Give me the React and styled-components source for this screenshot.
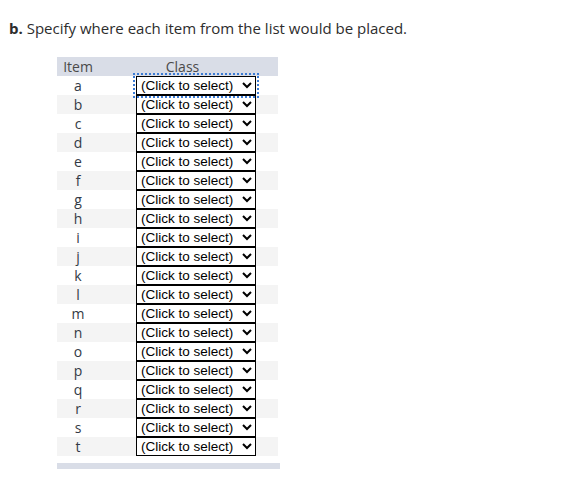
import React from 'react';
import styled, { createGlobalStyle } from 'styled-components';

const GlobalStyle = createGlobalStyle`
  body {
    margin: 0;
    background: #fff;
    font-family: "Open Sans", "Liberation Sans", sans-serif;
    color: #333;
  }
`;

const Page = styled.div`
  padding: 17px 9px;
`;

const Prompt = styled.p`
  margin: 0 0 18px;
  font-size: 15px;
  line-height: 22px;
  color: #2d2d2d;

  b {
    font-weight: 700;
  }
`;

const Wrap = styled.div`
  margin-left: 48px;
  width: 223px;
`;

const Table = styled.table`
  border-collapse: collapse;
  width: 221px;
  font-family: "Open Sans", "Liberation Sans", sans-serif;
`;

const HeadCell = styled.th`
  background: #d9dde7;
  font-weight: 400;
  font-size: 14px;
  color: #4a4a4a;
  height: 19px;
  padding: 0;
  line-height: 19px;
  text-align: center;
  padding-right: ${(p) => (p.$shift ? '12px' : '0')};
`;

const Row = styled.tr`
  background: ${(p) => (p.$shade ? '#f4f4f4' : '#fff')};
`;

const ItemCell = styled.td`
  width: 42px;
  height: 19px;
  padding: 0;
  text-align: center;
  font-size: 14px;
  line-height: 19px;
  color: #333a45;
`;

const ClassCell = styled.td`
  padding: 0 0 0 37px;
  height: 19px;
  vertical-align: top;
`;

const Picker = styled.select`
  display: block;
  width: 120px;
  height: 19px;
  margin: 0;
  padding: 0;
  border: 1px solid #000;
  border-radius: 0;
  background: #fff;
  font-family: "Liberation Sans", Arial, sans-serif;
  font-size: 13.5px;
  line-height: 17px;
  color: #000;
  outline: ${(p) => (p.$focused ? '2px dotted #3b7bd4' : 'none')};
  outline-offset: 1px;
`;

const Footer = styled.div`
  margin-top: 7px;
  height: 6px;
  background: #d9dde7;
`;

const items = 'abcdefghijklmnopqrst'.split('');

export default function App() {
  return (
    <>
      <GlobalStyle />
      <Page>
        <Prompt>
          <b>b.</b> Specify where each item from the list would be placed.
        </Prompt>
        <Wrap>
          <Table>
            <thead>
              <tr>
                <HeadCell>Item</HeadCell>
                <HeadCell $shift>Class</HeadCell>
              </tr>
            </thead>
            <tbody>
              {items.map((it, i) => (
                <Row key={it} $shade={i % 2 === 1}>
                  <ItemCell>{it}</ItemCell>
                  <ClassCell>
                    <Picker defaultValue="" $focused={i === 0}>
                      <option value="">(Click to select)</option>
                    </Picker>
                  </ClassCell>
                </Row>
              ))}
            </tbody>
          </Table>
          <Footer />
        </Wrap>
      </Page>
    </>
  );
}
